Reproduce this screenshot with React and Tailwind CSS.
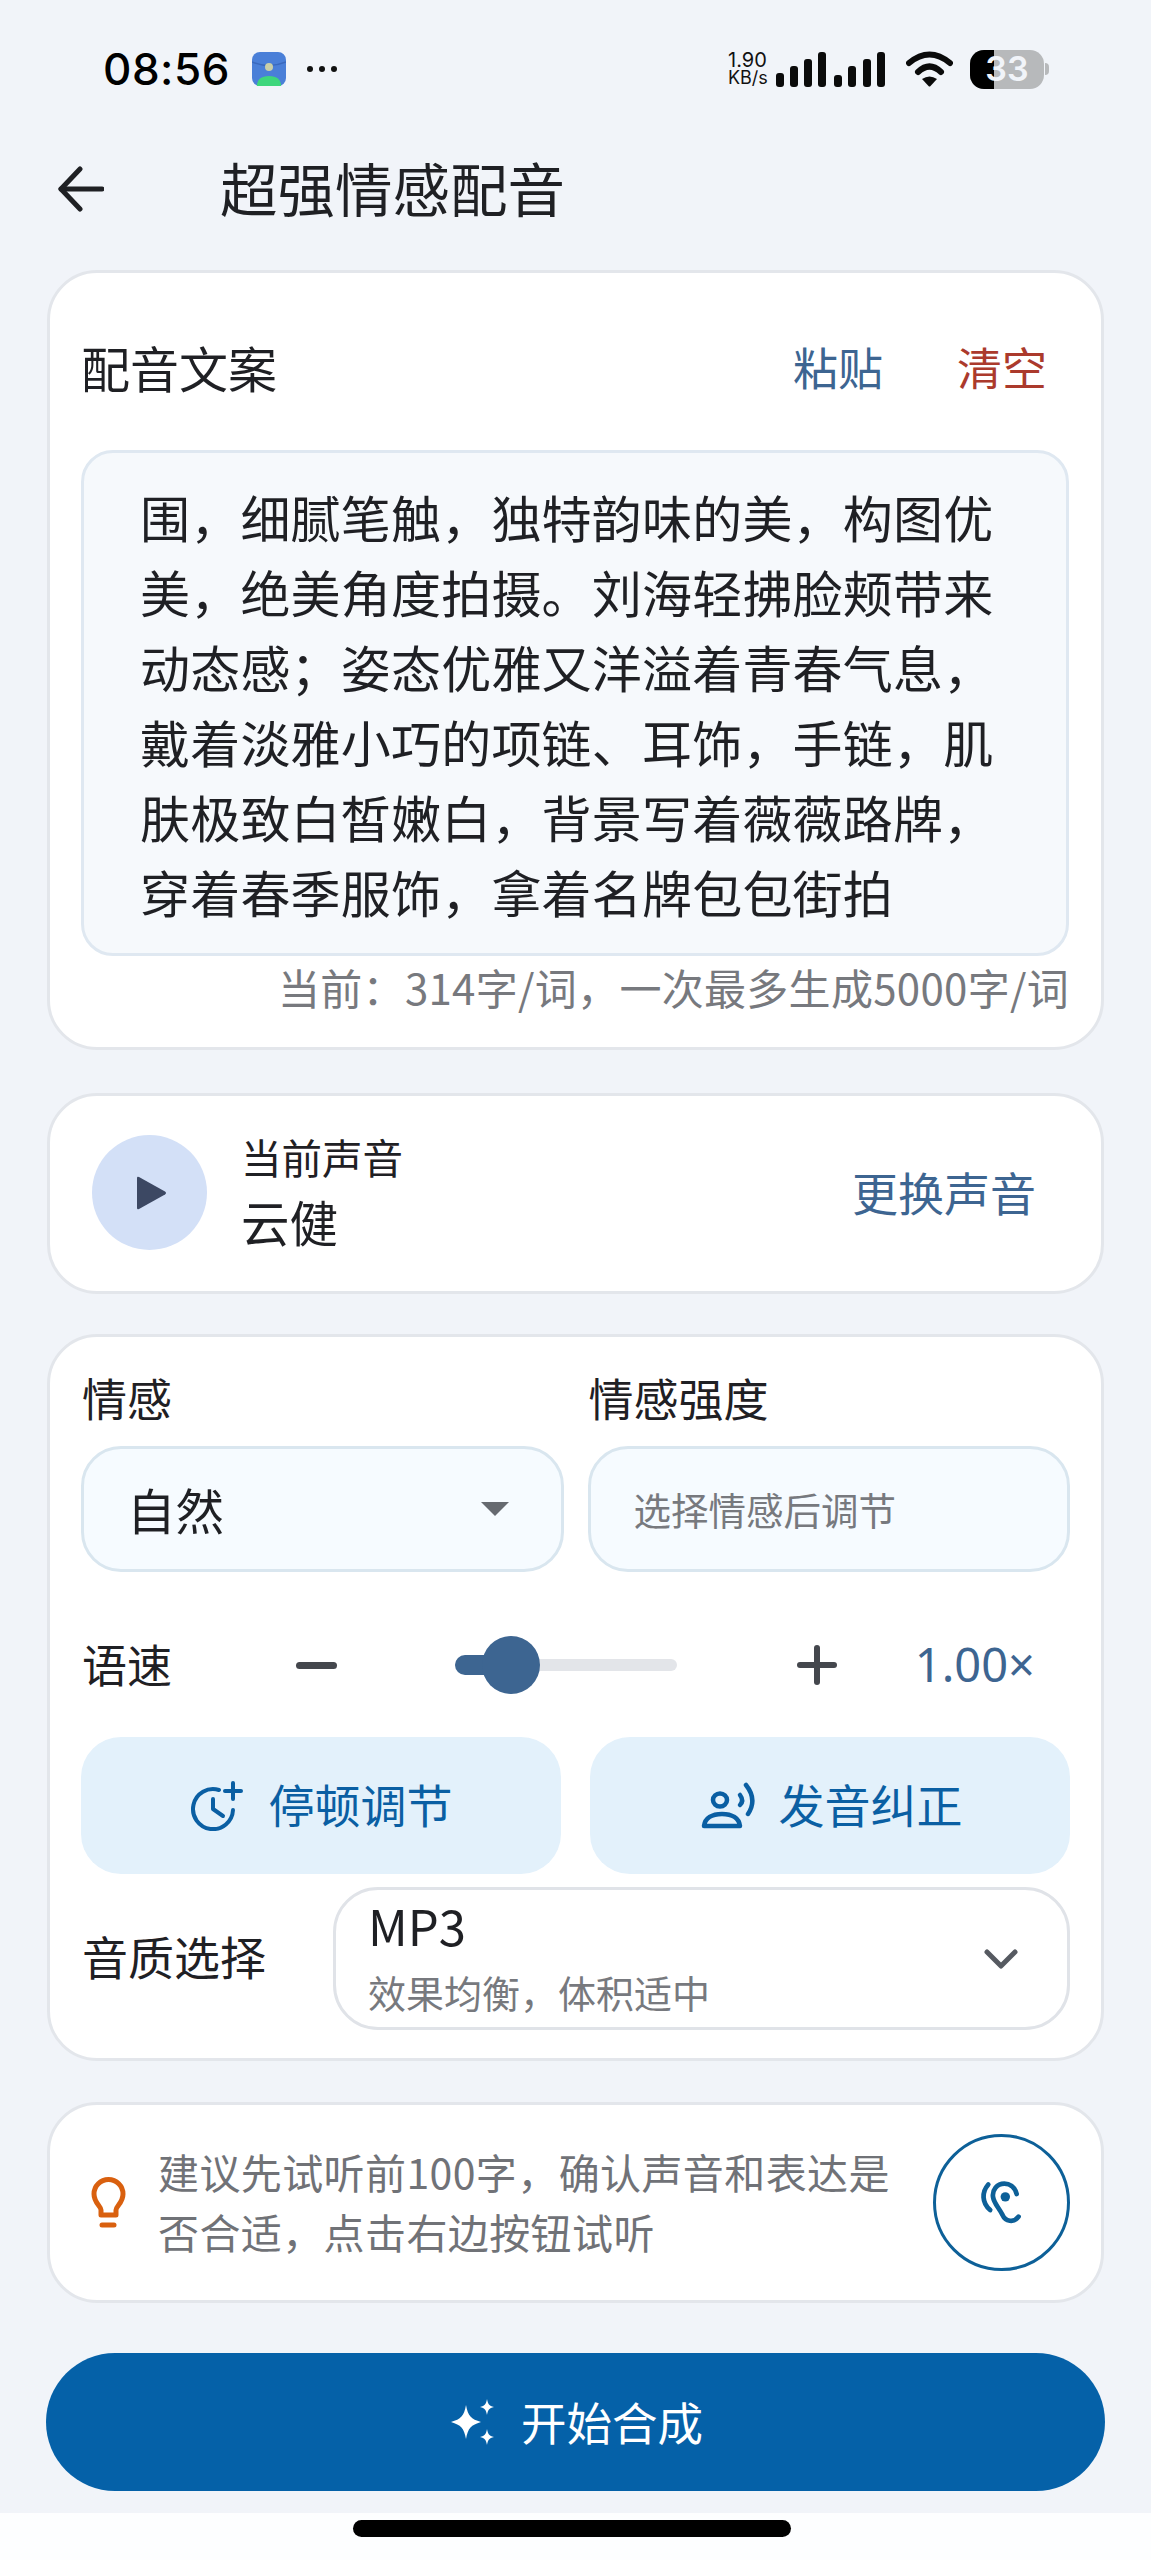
const lines = [
  '围，细腻笔触，独特韵味的美，构图优',
  '美，绝美角度拍摄。刘海轻拂脸颊带来',
  '动态感；姿态优雅又洋溢着青春气息，',
  '戴着淡雅小巧的项链、耳饰，手链，肌',
  '肤极致白皙嫩白，背景写着薇薇路牌，',
  '穿着春季服饰，拿着名牌包包街拍',
];

function StatusBar() {
  return (
    <div className="h-[138px] flex items-center pl-[103px] pr-[102px] text-black">
      <span className="font-['Inter',sans-serif] font-medium text-[44px] leading-none tracking-[0.5px]">08:56</span>
      <svg className="ml-[22px]" width="34" height="34" viewBox="0 0 34 34">
        <rect width="34" height="34" rx="8" fill="#4a7fd8" />
        <path d="M0 10 Q17 17 34 10" stroke="#3a69bd" strokeWidth="1.5" fill="none" />
        <circle cx="17" cy="15" r="4" fill="#c9cfa8" />
        <path d="M5 34 Q5 24 17 24 Q29 24 29 34 Z" fill="#3ed67c" />
      </svg>
      <svg className="ml-[21px]" width="30" height="8" viewBox="0 0 30 8">
        <circle cx="3" cy="4" r="3" fill="#111" />
        <circle cx="15" cy="4" r="3" fill="#111" />
        <circle cx="27" cy="4" r="3" fill="#111" />
      </svg>
      <div className="ml-auto flex items-center">
        <div className="w-[48px] font-['Inter',sans-serif] text-[20px] leading-[17px] text-[#111]">
          <div>1.90</div>
          <div className="text-[18px]">KB/s</div>
        </div>
        <svg width="110" height="36" viewBox="0 0 110 36" fill="#0b0b0b">
          <rect x="0" y="22" width="8" height="14" rx="3" />
          <rect x="14" y="15" width="8" height="21" rx="3" />
          <rect x="28" y="8" width="8" height="28" rx="3" />
          <rect x="42" y="1" width="8" height="35" rx="3" />
          <rect x="58" y="24" width="8" height="12" rx="3" />
          <rect x="72" y="15" width="8" height="21" rx="3" />
          <rect x="87" y="8" width="8" height="28" rx="3" />
          <rect x="101" y="1" width="8" height="35" rx="3" />
        </svg>
        <svg className="ml-[20px]" width="47" height="36" viewBox="0 0 47 36">
          <path d="M3 12 Q23.5 -5 44 12" stroke="#0b0b0b" strokeWidth="6" strokeLinecap="round" fill="none" />
          <path d="M12 21 Q23.5 10 35 21" stroke="#0b0b0b" strokeWidth="6" strokeLinecap="round" fill="none" />
          <path d="M16 28 Q23.5 23 31 28 L24.5 35 Q23.5 36 22.5 35 Z" fill="#0b0b0b" />
        </svg>
        <div className="ml-[17px] relative w-[74px] h-[39px] rounded-[14px] bg-[#b7b9bb] overflow-hidden flex">
          <div className="w-[24px] h-full bg-black" />
          <span className="absolute inset-0 flex items-center justify-center font-['Inter',sans-serif] font-semibold text-[34px] leading-none text-[#f1f4f9]">33</span>
        </div>
        <div className="ml-[1px] w-[4px] h-[12px] rounded-r-[4px] bg-[#b7b9bb]" />
      </div>
    </div>
  );
}

function Header() {
  return (
    <div className="h-[102px] mb-[30px] flex items-center pl-[58px]">
      <svg width="46" height="46" viewBox="0 0 46 46" fill="none" stroke="#1f2024" strokeWidth="5" strokeLinecap="round" strokeLinejoin="round">
        <path d="M44 23 H3" />
        <path d="M22 3 L3 23 L22 43" />
      </svg>
      <h1 className="ml-[116px] mb-[5px] text-[57.5px] leading-[70px] font-normal text-[#1f2024]">超强情感配音</h1>
    </div>
  );
}

function ScriptCard() {
  return (
    <div className="h-[780px] rounded-[50px] border-[3px] border-[#e3e6eb] bg-white pl-[31px] pr-[32px] pt-[64px]">
      <div className="h-[60px] flex items-center justify-between pr-[22px]">
        <span className="text-[49px] leading-[60px] text-[#1f2024]">配音文案</span>
        <div className="flex gap-[74px] text-[45px] leading-[60px]">
          <span className="text-[#3d6591]">粘贴</span>
          <span className="text-[#ab3a2c]">清空</span>
        </div>
      </div>
      <div className="mt-[53px] h-[506px] rounded-[32px] border-[3px] border-[#dfe8f1] bg-[#f6f9fc] pl-[56px] pt-[26px] overflow-hidden">
        {lines.map((l) => (
          <div key={l} className="text-[50px] leading-[75px] tracking-[0.2px] whitespace-nowrap text-[#1f2024]">{l}</div>
        ))}
      </div>
      <div className="mt-[6px] text-right text-[42px] leading-[50px] tracking-[0.3px] text-[#77797e] whitespace-nowrap">当前：314字/词，一次最多生成5000字/词</div>
    </div>
  );
}

function VoiceCard() {
  return (
    <div className="mt-[43px] h-[201px] rounded-[50px] border-[3px] border-[#e3e6eb] bg-white flex items-center pl-[42px] pr-[65px] pb-[2px]">
      <div className="w-[115px] h-[115px] rounded-full bg-[#d3e0f7] flex items-center justify-center">
        <svg className="ml-[5px]" width="30" height="36" viewBox="0 0 30 36">
          <path d="M2 2 L28 16.5 Q30 18 28 19.5 L2 34 Q0 35 0 33 L0 3 Q0 1 2 2 Z" fill="#3c4863" />
        </svg>
      </div>
      <div className="ml-[34px] mb-[3px]">
        <div className="text-[40.5px] leading-[52px] text-[#1f2024]">当前声音</div>
        <div className="mt-[8px] text-[48.5px] leading-[60px] text-[#1f2024]">云健</div>
      </div>
      <span className="ml-auto mb-[4px] text-[46px] leading-[60px] text-[#3d6591]">更换声音</span>
    </div>
  );
}

function ParamsCard() {
  return (
    <div className="mt-[40px] h-[727px] rounded-[50px] border-[3px] border-[#e3e6eb] bg-white px-[31px] pt-[31px]">
      <div className="grid grid-cols-2 gap-x-[24px]">
        <div>
          <div className="pl-[1px] text-[45px] leading-[60px] text-[#1f2024]">情感</div>
          <div className="mt-[18px] h-[126px] rounded-[40px] border-[3px] border-[#d9e6ef] bg-[#f6fbff] flex items-center pl-[43px] pr-[52px]">
            <span className="text-[48.5px] leading-[60px] text-[#1f2024]">自然</span>
            <svg className="ml-auto" width="28" height="14" viewBox="0 0 28 14">
              <path d="M0 0 H28 L14 14 Z" fill="#666a70" />
            </svg>
          </div>
        </div>
        <div>
          <div className="pl-[1px] text-[45px] leading-[60px] text-[#1f2024]">情感强度</div>
          <div className="mt-[18px] h-[126px] rounded-[40px] border-[3px] border-[#d9e6ef] bg-[#f6fbff] flex items-center pl-[43px]">
            <span className="text-[37.5px] leading-[50px] text-[#77797e]">选择情感后调节</span>
          </div>
        </div>
      </div>

      <div className="mt-[63px] h-[60px] flex items-center">
        <span className="w-[215px] pl-[1px] mb-[3px] text-[45px] leading-[60px] text-[#1f2024]">语速</span>
        <div className="w-[41px] h-[7px] rounded-full bg-[#44474d]" />
        <div className="ml-[118px] relative w-[222px] h-[12px] rounded-full bg-[#e3e5e9]">
          <div className="absolute left-0 top-[-4px] w-[56px] h-[20px] rounded-full bg-[#3d6591]" />
          <div className="absolute left-[27px] top-[-23px] w-[58px] h-[58px] rounded-full bg-[#3d6591]" />
        </div>
        <svg className="ml-[120px]" width="40" height="40" viewBox="0 0 40 40" stroke="#44474d" strokeWidth="6" strokeLinecap="round">
          <path d="M3 20 H37" />
          <path d="M20 3 V37" />
        </svg>
        <span className="ml-auto mr-[35px] mb-[3px] font-['Noto_Sans',sans-serif] text-[47px] leading-[60px] text-[#3d6591]">1.00×</span>
      </div>

      <div className="mt-[42px] grid grid-cols-2 gap-x-[29px]">
        <div className="h-[137px] rounded-[40px] bg-[#e3f1fb] flex items-center justify-center gap-[25px] text-[#0a5fa3]">
          <svg width="54" height="50" viewBox="0 0 54 50" fill="none" stroke="#0a5fa3" strokeWidth="4" strokeLinecap="round" strokeLinejoin="round">
            <path d="M29 9 A20 20 0 1 0 43 29" />
            <path d="M23 18 V28 L33 35" />
            <path d="M43 2 V18" />
            <path d="M35 10 H51" />
          </svg>
          <span className="mb-[5px] text-[46px] leading-[60px]">停顿调节</span>
        </div>
        <div className="h-[137px] rounded-[40px] bg-[#e3f1fb] flex items-center justify-center gap-[21px] text-[#0a5fa3]">
          <svg width="60" height="52" viewBox="0 0 60 52" fill="none" stroke="#0a5fa3" strokeWidth="4.5" strokeLinecap="round" strokeLinejoin="round">
            <ellipse cx="22" cy="20" rx="7" ry="6.5" />
            <path d="M6 46 C7 38 14 34 24 34 C34 34 41 38 42 46 Z" />
            <path d="M42 15 C45 19 45 22 42 25" />
            <path d="M48 5 C56 15 56 25 50 34" />
          </svg>
          <span className="mb-[5px] text-[46px] leading-[60px]">发音纠正</span>
        </div>
      </div>

      <div className="mt-[13px] flex items-center justify-between">
        <span className="pl-[1px] mb-[8px] text-[46px] leading-[60px] text-[#1f2024]">音质选择</span>
        <div className="w-[737px] h-[143px] rounded-[45px] border-[3px] border-[#e0e3e8] bg-white flex items-center pl-[32px] pr-[49px]">
          <div className="mb-[5px]">
            <div className="text-[49px] leading-[60px] text-[#1f2024]">MP3</div>
            <div className="mt-[12px] text-[38px] leading-[50px] text-[#77797e]">效果均衡，体积适中</div>
          </div>
          <svg className="ml-auto" width="34" height="20" viewBox="0 0 34 20" fill="none" stroke="#565a61" strokeWidth="5" strokeLinecap="round" strokeLinejoin="round">
            <path d="M3 3 L17 17 L31 3" />
          </svg>
        </div>
      </div>
    </div>
  );
}

function TipCard() {
  return (
    <div className="mt-[41px] h-[201px] rounded-[50px] border-[3px] border-[#e3e6eb] bg-white flex items-center pl-[37px] pr-[31px]">
      <svg width="44" height="54" viewBox="0 0 44 54" fill="none" stroke="#d9600f" strokeWidth="5" strokeLinecap="round" strokeLinejoin="round">
        <path d="M14 39 L14 34 C14 30 7 27 7 18 A14.5 14.5 0 0 1 36 18 C36 27 29 30 29 34 L29 39 Z" />
        <path d="M15 49 H27" />
      </svg>
      <div className="ml-[27px] mb-[3px] text-[41px] leading-[60px] tracking-[0.4px] text-[#707277] whitespace-nowrap">
        <div>建议先试听前100字，确认声音和表达是</div>
        <div>否合适，点击右边按钮试听</div>
      </div>
      <div className="ml-auto w-[137px] h-[137px] rounded-full border-[3px] border-[#0d6098] flex items-center justify-center">
        <svg width="52" height="52" viewBox="0 0 55 55" fill="none" stroke="#0d6098" strokeWidth="5" strokeLinecap="round">
          <path d="M43 18 C41 10 35 7 30 7 C22 7 17 14 18 21 C19 28 24 32 28 40 C31 47 40 49 45 42" />
          <path d="M13 8 C6 16 6 27 15 35" />
          <circle cx="31" cy="21" r="5" fill="#0d6098" stroke="none" />
        </svg>
      </div>
    </div>
  );
}

export default function App() {
  return (
    <div className="w-[1151px] h-[2560px] bg-[#f1f4f9] flex flex-col overflow-hidden font-['Noto_Sans_CJK_SC','Noto_Sans',sans-serif]">
      <StatusBar />
      <Header />
      <div className="px-[47px]">
        <ScriptCard />
        <VoiceCard />
        <ParamsCard />
        <TipCard />
        <div className="mt-[50px] -mx-[1px] h-[138px] rounded-full bg-[#0561a8] flex items-center justify-center gap-[23px] text-white">
          <svg width="50" height="52" viewBox="0 0 50 52" fill="#fff">
            <path d="M18 9 C20 20 23 23 33 26 C23 29 20 32 18 43 C16 32 13 29 3 26 C13 23 16 20 18 9 Z" />
            <path d="M39 3 C40 8 41 10 46 11 C41 12 40 14 39 19 C38 14 37 12 32 11 C37 10 38 8 39 3 Z" />
            <path d="M39 33 C40 38 41 40 46 41 C41 42 40 44 39 49 C38 44 37 42 32 41 C37 40 38 38 39 33 Z" />
          </svg>
          <span className="mb-[3px] text-[45.5px] leading-[60px]">开始合成</span>
        </div>
      </div>
      <div className="mt-[22px] flex-1 bg-[#fdfeff] pt-[7px] pr-[8px] flex justify-center">
        <div className="w-[438px] h-[17px] rounded-full bg-black" />
      </div>
    </div>
  );
}
